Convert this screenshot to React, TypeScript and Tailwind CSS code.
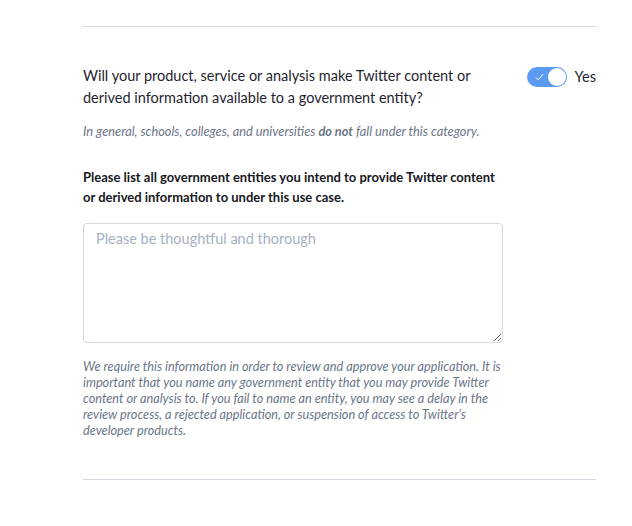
import React, { useState } from "react";

export default function App() {
  const [enabled, setEnabled] = useState(true);
  const [entities, setEntities] = useState("");

  return (
    <main className="min-h-screen bg-white font-['Lato',sans-serif] text-[#1f2430]">
      <div className="ml-[83px] w-[513px]">
        <div className="h-[27px] border-b border-[#d6d9e0]" />

        <section className="pt-[38px] pb-[41px] border-b border-[#d6d9e0]">
          <div className="flex items-start justify-between">
            <p className="w-[400px] text-[14.5px] leading-[22px]">
              Will your product, service or analysis make Twitter content or derived information
              available to a government entity?
            </p>
            <label className="flex items-center gap-2 pt-[1px] cursor-pointer">
              <button
                type="button"
                onClick={() => setEnabled(!enabled)}
                className={`relative h-[20px] w-[40px] rounded-full ${enabled ? "bg-[#5b9bf2]" : "bg-[#cbd2dc]"}`}
              >
                {enabled && (
                  <svg
                    className="absolute left-[8px] top-[6px]"
                    width="9"
                    height="8"
                    viewBox="0 0 9 8"
                    fill="none"
                  >
                    <path d="M1 4.5 L3.3 6.8 L8 1.2" stroke="white" strokeWidth="1" />
                  </svg>
                )}
                <span
                  className={`absolute top-[1px] h-[18px] w-[18px] rounded-full bg-white ${enabled ? "left-[21px]" : "left-[1px]"}`}
                />
              </button>
              <span className="text-[14.5px]">{enabled ? "Yes" : "No"}</span>
            </label>
          </div>

          <p className="mt-[14px] text-[12.8px] leading-[16px] italic text-[#6b7588]">
            In general, schools, colleges, and universities <b className="font-bold">do not</b> fall
            under this category.
          </p>

          <p className="mt-[28px] w-[420px] text-[13px] leading-[20px] font-bold text-[#16181d]">
            Please list all government entities you intend to provide Twitter content or derived
            information to under this use case.
          </p>

          <textarea
            value={entities}
            onChange={(e) => setEntities(e.target.value)}
            placeholder="Please be thoughtful and thorough"
            className="mt-[16px] block h-[120px] w-[420px] rounded-[4px] border border-[#d3d8e2] px-[12px] py-[5px] text-[14.5px] leading-[20px] placeholder:text-[#a7b0bf] outline-none"
          />

          <p className="mt-[15px] w-[420px] text-[12.7px] leading-[16px] italic text-[#6b7588]">
            We require this information in order to review and approve your application. It is
            important that you name any government entity that you may provide Twitter content or
            analysis to. If you fail to name an entity, you may see a delay in the review process, a
            rejected application, or suspension of access to Twitter's developer products.
          </p>
        </section>
      </div>
    </main>
  );
}
